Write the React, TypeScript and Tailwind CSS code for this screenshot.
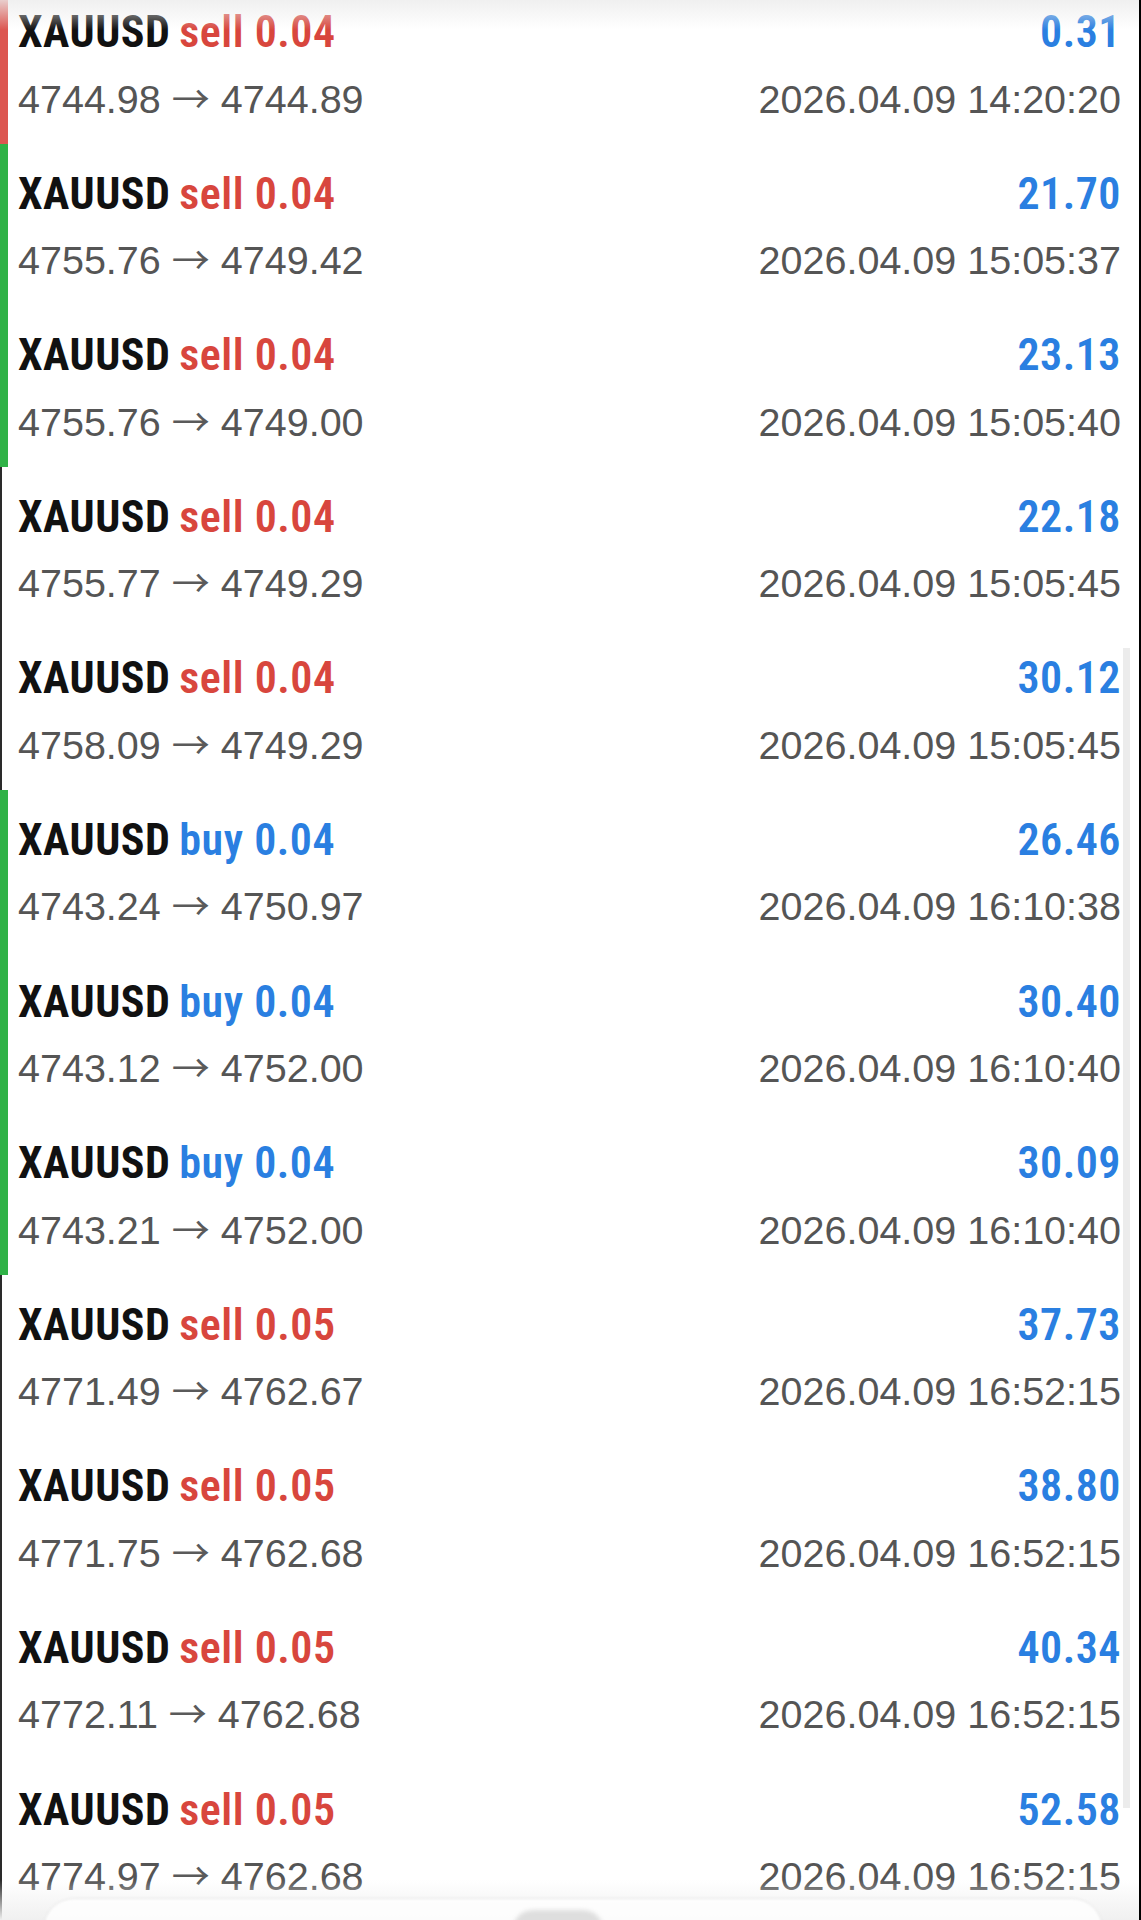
import React from "react";

type Row = {
  side: "sell" | "buy";
  lot: string;
  open: string;
  close: string;
  profit: string;
  time: string;
  bar: "red" | "green" | "none";
};

const rows: Row[] = [
  { side: "sell", lot: "0.04", open: "4744.98", close: "4744.89", profit: "0.31", time: "2026.04.09 14:20:20", bar: "red" },
  { side: "sell", lot: "0.04", open: "4755.76", close: "4749.42", profit: "21.70", time: "2026.04.09 15:05:37", bar: "green" },
  { side: "sell", lot: "0.04", open: "4755.76", close: "4749.00", profit: "23.13", time: "2026.04.09 15:05:40", bar: "green" },
  { side: "sell", lot: "0.04", open: "4755.77", close: "4749.29", profit: "22.18", time: "2026.04.09 15:05:45", bar: "none" },
  { side: "sell", lot: "0.04", open: "4758.09", close: "4749.29", profit: "30.12", time: "2026.04.09 15:05:45", bar: "none" },
  { side: "buy", lot: "0.04", open: "4743.24", close: "4750.97", profit: "26.46", time: "2026.04.09 16:10:38", bar: "green" },
  { side: "buy", lot: "0.04", open: "4743.12", close: "4752.00", profit: "30.40", time: "2026.04.09 16:10:40", bar: "green" },
  { side: "buy", lot: "0.04", open: "4743.21", close: "4752.00", profit: "30.09", time: "2026.04.09 16:10:40", bar: "green" },
  { side: "sell", lot: "0.05", open: "4771.49", close: "4762.67", profit: "37.73", time: "2026.04.09 16:52:15", bar: "none" },
  { side: "sell", lot: "0.05", open: "4771.75", close: "4762.68", profit: "38.80", time: "2026.04.09 16:52:15", bar: "none" },
  { side: "sell", lot: "0.05", open: "4772.11", close: "4762.68", profit: "40.34", time: "2026.04.09 16:52:15", bar: "none" },
  { side: "sell", lot: "0.05", open: "4774.97", close: "4762.68", profit: "52.58", time: "2026.04.09 16:52:15", bar: "none" },
];

const condensed = {
  fontFamily:
    '"Roboto Condensed", "Liberation Sans Narrow", "DejaVu Sans Condensed", "Noto Sans", sans-serif',
};
const regular = { fontFamily: '"Liberation Sans", Arial, sans-serif' };
const arrowFont = { fontFamily: '"Noto Sans CJK SC", "DejaVu Sans", sans-serif' };

function Bar({ bar }: { bar: Row["bar"] }) {
  if (bar === "red") return <div className="w-[8px] shrink-0 bg-[#dc5650]" />;
  if (bar === "green") return <div className="w-[8px] shrink-0 bg-[#2fb246]" />;
  return <div className="w-[8px] shrink-0 border-l-2 border-[#2a2a2a]" />;
}

function TradeRow({ r }: { r: Row }) {
  return (
    <div className="flex h-[161.6px]">
      <Bar bar={r.bar} />
      <div className="flex flex-1 flex-col pl-[10px] pr-[18px]">
        <div
          className="flex items-baseline justify-between pt-[29px] text-[44px] leading-[42px] tracking-[0.5px] font-stretch-condensed"
          style={condensed}
        >
          <div className="flex items-baseline gap-[9px]">
            <span className="font-bold text-[#111111]">XAUUSD</span>
            <span className={`font-semibold ${r.side === "sell" ? "text-[#d8463d]" : "text-[#2a7fe1]"}`}>
              {r.side} {r.lot}
            </span>
          </div>
          <span className="font-semibold text-[#2a7fe1]">{r.profit}</span>
        </div>
        <div
          className="mt-[24.5px] flex items-baseline justify-between text-[39.5px] leading-[38px] text-[#555555]"
          style={regular}
        >
          <span>
            {r.open}{" "}
            <span className="text-[38px] text-[#5a5a5a]" style={arrowFont}>
              →
            </span>{" "}
            {r.close}
          </span>
          <span>{r.time}</span>
        </div>
      </div>
    </div>
  );
}

export default function App() {
  return (
    <div className="relative h-[1920px] w-[1141px] overflow-hidden border-r-2 border-black bg-white">
      <div className="-mt-[18px] flex flex-col">
        {rows.map((r, i) => (
          <TradeRow key={i} r={r} />
        ))}
      </div>
      {/* top status-bar fade */}
      <div className="pointer-events-none absolute left-0 right-0 top-0 h-[30px] bg-gradient-to-b from-[#ececec]/80 to-white/0" />
      {/* scrollbar */}
      <div className="pointer-events-none absolute right-[9px] top-[648px] h-[1160px] w-[7px] bg-[#ececec]" />
      {/* bottom tab-bar fade */}
      <div className="pointer-events-none absolute bottom-0 left-0 right-0 h-[40px] bg-gradient-to-b from-white/0 to-[#f0f0f0]" />
      <div className="pointer-events-none absolute bottom-[-40px] left-[43px] h-[62px] w-[1060px] rounded-[40px] border border-[#e6e6e6] bg-white/80 blur-[1px]" />
      <div className="pointer-events-none absolute bottom-[-30px] left-[513px] h-[40px] w-[90px] rounded-full bg-[#dedede] blur-[2px]" />
    </div>
  );
}
